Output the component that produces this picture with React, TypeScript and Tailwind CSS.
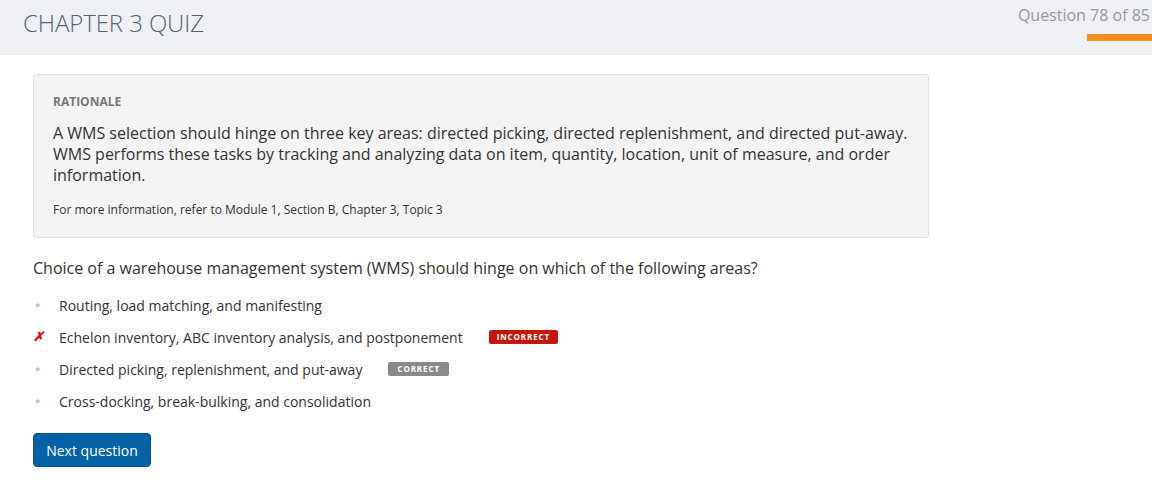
import React from 'react';

const options = [
  { text: 'Routing, load matching, and manifesting', mark: 'none' },
  { text: 'Echelon inventory, ABC inventory analysis, and postponement', mark: 'incorrect' },
  { text: 'Directed picking, replenishment, and put-away', mark: 'correct' },
  { text: 'Cross-docking, break-bulking, and consolidation', mark: 'none' },
];

const App: React.FC = () => {
  return (
    <div className="min-h-[483px] w-full bg-white font-['Open_Sans',sans-serif] text-[#333]">
      {/* Header */}
      <div className="flex h-[55px] justify-between bg-[#eff0f4]">
        <h1 className="pl-[23px] pt-[5px] text-[24px] font-light tracking-[-0.1px] text-[#5a6270]">CHAPTER 3 QUIZ</h1>
        <div className="flex flex-col items-end pt-[3px]">
          <span className="pr-[2px] text-[16px] text-[#999]">Question 78 of 85</span>
          <div className="mt-[7px] h-[7px] w-[65px] bg-[#f5901e]"></div>
        </div>
      </div>

      <div className="pl-[33px] pt-[19px]">
        {/* Rationale */}
        <div className="w-[896px] rounded-[3px] border border-[#e2e2e2] bg-[#f4f4f4] px-[19px] pb-[18px] pt-[18px]">
          <div className="text-[12px] font-bold text-[#777]">RATIONALE</div>
          <p className="mt-[12px] text-[16px] leading-[21px] text-[#333]">
            A WMS selection should hinge on three key areas: directed picking, directed replenishment, and directed put-away. WMS performs these tasks by tracking and analyzing data on item, quantity, location, unit of measure, and order information.
          </p>
          <p className="mt-[15px] text-[12px] text-[#333]">For more information, refer to Module 1, Section B, Chapter 3, Topic 3</p>
        </div>

        {/* Question */}
        <p className="mt-[18px] text-[16px] text-[#333]">
          Choice of a warehouse management system (WMS) should hinge on which of the following areas?
        </p>

        <ul className="mt-[14px] flex flex-col gap-[10px]">
          {options.map((o) => (
            <li key={o.text} className="flex h-[22px] items-center text-[14px] text-[#333]">
              <span className="flex w-[26px] items-center">
                {o.mark === 'incorrect' ? (
                  <span className="text-[13px] font-bold italic text-[#e00]">✗</span>
                ) : (
                  <span className="ml-[2px] text-[7px] text-[#bbb]">◈</span>
                )}
              </span>
              <span>{o.text}</span>
              {o.mark === 'incorrect' && (
                <span className="ml-[26px] rounded-[2px] bg-[#c4170c] px-[8px] py-[1px] text-[8px] font-bold tracking-[0.9px] text-white">INCORRECT</span>
              )}
              {o.mark === 'correct' && (
                <span className="ml-[26px] rounded-[2px] bg-[#8a8a8a] px-[9px] py-[1px] text-[8px] font-bold tracking-[0.9px] text-white">CORRECT</span>
              )}
            </li>
          ))}
        </ul>

        <button className="mt-[21px] h-[34px] w-[118px] rounded-[4px] border border-[#05548c] bg-[#0563a6] text-[14px] text-white">
          Next question
        </button>
      </div>
    </div>
  );
};

export default App;
